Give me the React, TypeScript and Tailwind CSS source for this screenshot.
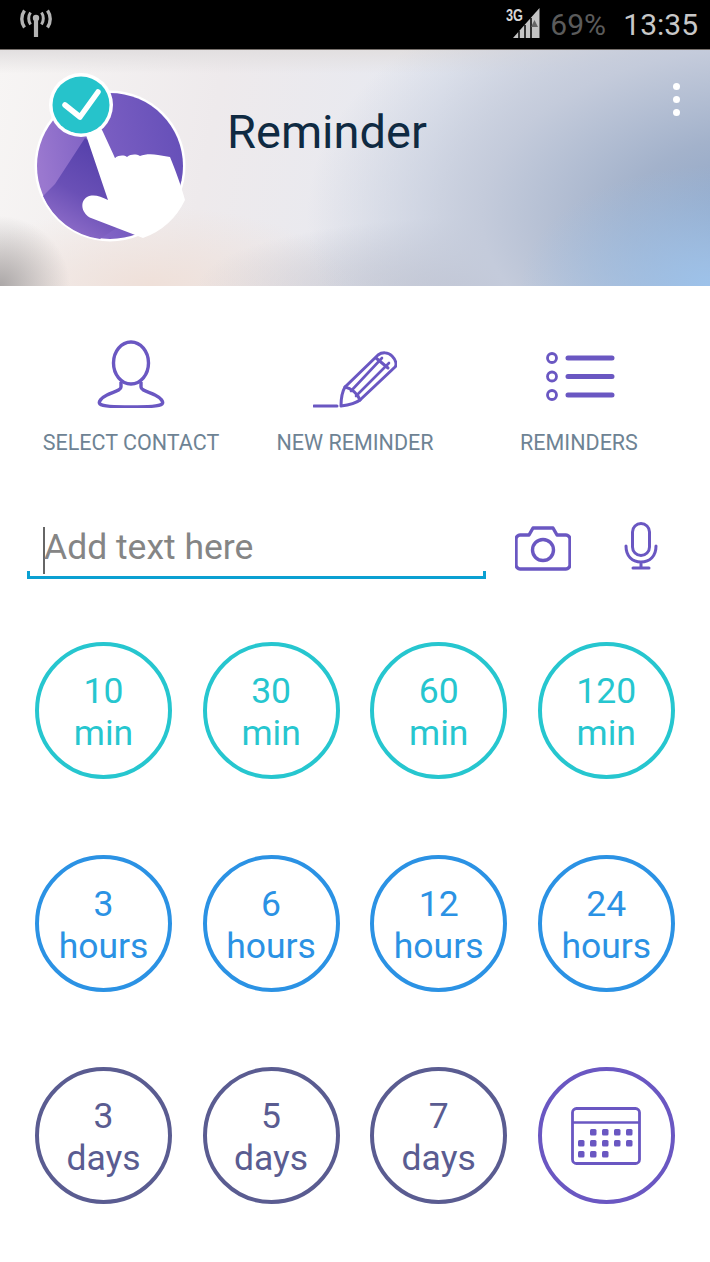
const rows = [
  {
    top: 'mt-[63px]',
    ring: 'border-[#26c6cf] text-[#26c6cf]',
    items: [['10', 'min'], ['30', 'min'], ['60', 'min'], ['120', 'min']],
  },
  {
    top: 'mt-[76px]',
    ring: 'border-[#2b92e4] text-[#2b92e4]',
    items: [['3', 'hours'], ['6', 'hours'], ['12', 'hours'], ['24', 'hours']],
  },
  {
    top: 'mt-[75px]',
    ring: 'border-[#5a5c91] text-[#5a5c91]',
    items: [['3', 'days'], ['5', 'days'], ['7', 'days']],
  },
]

function StatusBar() {
  return (
    <div className="h-[50px] bg-black border-b border-[#77706c] flex items-center pl-[20px] pr-[12px]">
      <svg width="32" height="30" viewBox="0 0 32 30" className="mt-[-2px]" fill="none" stroke="#b4b4b4">
        <circle cx="16" cy="9" r="3.200" fill="#b4b4b4" stroke="none" />
        <path d="M16 10v18" strokeWidth="4.200" />
        <path d="M10.500 3.500c-2.400 3.400-2.400 8.600 0 12" strokeWidth="3" />
        <path d="M21.500 3.500c2.400 3.400 2.400 8.600 0 12" strokeWidth="3" />
        <path d="M4.500 1.500c-3.600 5-3.600 12 0 17" strokeWidth="3.400" />
        <path d="M27.500 1.500c3.600 5 3.600 12 0 17" strokeWidth="3.400" />
      </svg>
      <div className="ml-auto flex items-center">
        <div className="relative w-[34px] h-[32px] mr-[10px] mt-[-3px]">
          <svg width="34" height="32" viewBox="0 0 34 32" className="absolute left-0 top-0">
            <path d="M33.500 1v30H7z" fill="#c4c4c4" />
            <path d="M13 31V24M19 31V18M25 31V11" stroke="#000" strokeWidth="1.500" />
            <path d="M25 20l3.500-7 3.500 7z" fill="#666" />
          </svg>
          <span className="absolute left-[0px] top-[1px] text-[17px] leading-[16px] font-bold text-[#d6d6d6] font-['Liberation_Sans',sans-serif] scale-x-75 origin-left">
            3G
          </span>
        </div>
        <span className="text-[#5b5b5b] text-[30px] leading-[34px] w-[73px] font-['Roboto',sans-serif]">69%</span>
        <span className="text-[#c8c8c8] text-[30px] leading-[34px] font-['Roboto',sans-serif]">13:35</span>
      </div>
    </div>
  )
}

function AppLogo() {
  return (
    <svg width="156" height="174" viewBox="0 0 156 174" className="shrink-0">
      <defs>
        <linearGradient id="disc" x1="0" y1="0.4" x2="1" y2="0.2">
          <stop offset="0" stopColor="#9a78cf" />
          <stop offset="0.45" stopColor="#7a5ec2" />
          <stop offset="1" stopColor="#654fb8" />
        </linearGradient>
        <linearGradient id="wedge" x1="0.6" y1="0.1" x2="0.2" y2="0.9">
          <stop offset="0" stopColor="#5742ac" />
          <stop offset="0.55" stopColor="#6a50b6" />
          <stop offset="1" stopColor="#8d6cc8" />
        </linearGradient>
      </defs>
      <circle cx="77" cy="94" r="75.500" fill="#fff" />
      <circle cx="77" cy="94" r="73" fill="url(#disc)" />
      <path d="M52 66L22 112 10 124a73 73 0 0 0 57 43l30-20L90 90z" fill="url(#wedge)" />
      <path
        d="M53 63c-2-8 14-12 17-3l12 26c4-3 9-3 12-1 4-3 9-3 13-1 5-2 12-2 18-1l12 2c5 12 11 28 15 43A74 74 0 0 1 110 166L58 146c-9-4-12-16-4-21 6-3 13-1 21 3z"
        fill="#fff"
      />
      <circle cx="48" cy="33" r="32" fill="#fff" />
      <circle cx="48" cy="33" r="28.500" fill="#26c3cb" />
      <path d="M32 33l15 12 18-25" fill="none" stroke="#fff" strokeWidth="5.500" strokeLinecap="round" strokeLinejoin="round" />
    </svg>
  )
}

function ContactIcon() {
  return (
    <svg width="68" height="68" viewBox="0 0 68 68" fill="none" stroke="#6a57c2" strokeWidth="3.400" className="mt-[2px]">
      <ellipse cx="34" cy="23" rx="17.500" ry="21" />
      <path d="M24 42v5c0 4-9 5-14 8-6 3-9 7-7 9 2 2 14 3 31 3s29-1 31-3c2-2-1-6-7-9-5-3-14-4-14-8v-5" strokeLinejoin="round" />
    </svg>
  )
}

function PencilIcon() {
  return (
    <svg width="84" height="58" viewBox="0 0 84 58" fill="none" stroke="#6a57c2" strokeWidth="3" strokeLinejoin="round" strokeLinecap="round" className="mt-[12px]">
      <path d="M1 56h23" />
      <path d="M28 56c0-8 1-14 4-19L65 5c4-3 10-3 14 1s5 9 3 11L47 50c-5 4-11 5-19 6z" />
      <path d="M32 37c6 1 13 7 15 13" />
      <path d="M38 41L69 8M43 46L76 13" strokeWidth="2.600" />
      <path d="M63 8l12 10" />
    </svg>
  )
}

function ListIcon() {
  return (
    <svg width="72" height="52" viewBox="0 0 72 52" fill="none" stroke="#6a57c2" className="mt-[13px]">
      <circle cx="9" cy="7" r="4.500" strokeWidth="2.800" />
      <circle cx="9" cy="25.500" r="4.500" strokeWidth="2.800" />
      <circle cx="9" cy="44" r="4.500" strokeWidth="2.800" />
      <path d="M25 7h44M25 25.500h44M25 44h44" strokeWidth="5" strokeLinecap="round" />
    </svg>
  )
}

function CalendarIcon() {
  const dots = [
    [19, 22], [31, 22], [43, 22], [55, 22],
    [7, 33], [19, 33], [31, 33], [43, 33], [55, 33],
    [7, 44], [19, 44], [31, 44],
  ]
  return (
    <svg width="70" height="58" viewBox="0 0 70 58" fill="none" stroke="#6a57c2">
      <rect x="1.500" y="1.500" width="67" height="55" rx="4" strokeWidth="2.800" />
      <path d="M1.500 15.500h67" strokeWidth="2.600" />
      {dots.map(([x, y]) => (
        <rect key={`${x}-${y}`} x={x} y={y} width="6.500" height="6.500" rx="1.500" fill="#6a57c2" stroke="none" />
      ))}
    </svg>
  )
}

function App() {
  return (
    <div className="w-[710px] h-[1262px] bg-white overflow-hidden font-['Roboto',sans-serif]">
      <StatusBar />

      {/* Header */}
      <div className="relative h-[236px] flex items-start pl-[33px] pt-[22px] bg-[radial-gradient(ellipse_190px_120px_at_100%_100%,#9dc2ea_0%,#9dc2ea00_100%),radial-gradient(ellipse_460px_270px_at_108%_70%,#8ca4c6_0%,#a3b2cb_30%,#c4cbdb_62%,#c4cbdb00_100%),radial-gradient(ellipse_300px_70px_at_70%_100%,#bcbeca_0%,#bcbeca00_100%),radial-gradient(ellipse_70px_70px_at_0%_100%,#aba7a7_0%,#aba7a700_100%),radial-gradient(ellipse_200px_80px_at_150px_100%,#efe0d9_0%,#efe0d900_100%),linear-gradient(180deg,#e2dfe0_0%,#e2dfe000_10%),linear-gradient(100deg,#f7f5f4_0%,#eeeaec_30%,#e6e9f1_60%,#d5d8e2_88%,#c4c8d2_100%)]">
        <AppLogo />
        <h1 className="ml-[38px] mt-[30px] text-[47px] leading-[60px] font-normal text-[#0f2a42]">Reminder</h1>
        <div className="absolute right-[30px] top-[33px] flex flex-col gap-[6px]">
          <span className="w-[7px] h-[7px] rounded-full bg-white" />
          <span className="w-[7px] h-[7px] rounded-full bg-white" />
          <span className="w-[7px] h-[7px] rounded-full bg-white" />
        </div>
      </div>

      {/* Actions */}
      <div className="mt-[52px] grid grid-cols-[262px_186px_262px]">
        <div className="flex flex-col items-center">
          <div className="h-[72px]"><ContactIcon /></div>
          <span className="mt-[21px] text-[21.500px] leading-[24px] text-[#6e8394] whitespace-nowrap">SELECT CONTACT</span>
        </div>
        <div className="flex flex-col items-center">
          <div className="h-[72px]"><PencilIcon /></div>
          <span className="mt-[21px] text-[21.500px] leading-[24px] text-[#6e8394] whitespace-nowrap">NEW REMINDER</span>
        </div>
        <div className="flex flex-col items-center">
          <div className="h-[72px]"><ListIcon /></div>
          <span className="mt-[21px] text-[21.500px] leading-[24px] text-[#6e8394]">REMINDERS</span>
        </div>
      </div>

      {/* Input */}
      <div className="mt-[64px] flex items-center pl-[27px]">
        <div className="relative w-[459px] h-[60px] border-b-[3px] border-x-[3px] border-[#0aa0d2] [clip-path:inset(52px_0_0_0)]" />
        <div className="relative w-0 h-[60px]">
          <span className="absolute left-[-443px] top-[8px] h-[47px] w-[2px] bg-[#666]" />
          <span className="absolute left-[-442px] top-[5px] text-[35.500px] leading-[46px] text-[#858585] whitespace-nowrap">
            Add text here
          </span>
        </div>
        <svg width="56" height="46" viewBox="0 0 56 46" fill="none" stroke="#6a57c2" strokeWidth="3.400" strokeLinejoin="round" className="ml-[29px] mt-[-2px]">
          <path d="M5 10h9l4-7h20l4 7h9c2 0 4 2 4 4v26c0 2-2 4-4 4H5c-2 0-4-2-4-4V14c0-2 2-4 4-4z" />
          <circle cx="28" cy="25" r="10.500" />
        </svg>
        <svg width="36" height="48" viewBox="0 0 36 48" fill="none" stroke="#6a57c2" strokeWidth="3" strokeLinecap="round" className="ml-[52px] mt-[-6px]">
          <rect x="9.500" y="1.500" width="17" height="32" rx="8.500" />
          <path d="M3 24c0 10 6 16 15 16s15-6 15-16M18 40v6M10 46h16" />
        </svg>
      </div>

      {/* Time buttons */}
      {rows.map((row, i) => (
        <div key={i} className={`${row.top} pl-[35px] flex gap-[30.600px]`}>
          {row.items.map(([n, unit]) => (
            <button
              key={n}
              className={`w-[137px] h-[137px] rounded-full border-[4px] ${row.ring} flex flex-col items-center justify-center pt-[2px] text-[35.500px] leading-[42px]`}
            >
              <span>{n}</span>
              <span>{unit}</span>
            </button>
          ))}
          {i === 2 && (
            <button className="w-[137px] h-[137px] rounded-full border-[4px] border-[#6a57c2] flex items-center justify-center">
              <CalendarIcon />
            </button>
          )}
        </div>
      ))}
    </div>
  )
}

export default App
